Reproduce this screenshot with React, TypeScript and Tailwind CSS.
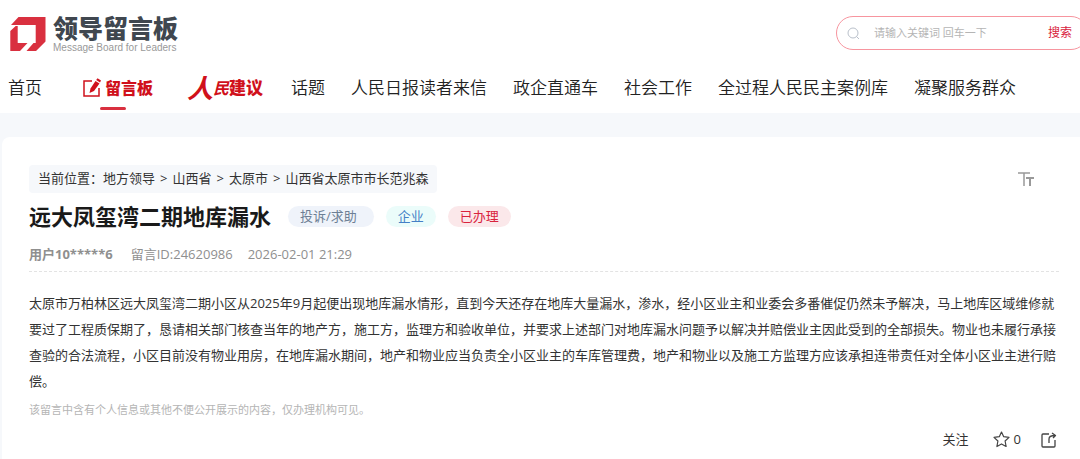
const navItems = ["话题", "人民日报读者来信", "政企直通车", "社会工作", "全过程人民民主案例库", "凝聚服务群众"];

const crumbs = ["地方领导", "山西省", "太原市", "山西省太原市市长范兆森"];

const tags = [
  { label: "投诉/求助", style: "bg-[#eff3fa] text-[#6d7f95] pr-[17px]" },
  { label: "企业", style: "bg-[#ebfcfa] text-[#4480c6]" },
  { label: "已办理", style: "bg-[#fbe8ea] text-[#d9233d]" },
];

function Logo() {
  return (
    <a href="#" className="flex items-start gap-[7px]">
      <svg width="36" height="36" viewBox="0 0 36 36" className="mt-px">
        <path d="M8.5 0H35.5V24.5L26 34H16.5L23.5 26H25.7V8H1Z" fill="#d9303f" />
        <path d="M5.7 9L0.3 14V34H10L17.5 26H7.7V9Z" fill="#d9303f" />
      </svg>
      <span className="flex flex-col">
        <span className="text-[25px] leading-[25px] font-black text-[#40474f]">领导留言板</span>
        <span className="mt-px font-['Liberation_Sans',sans-serif] text-[10px] leading-3 text-[#999]">
          Message Board for Leaders
        </span>
      </span>
    </a>
  );
}

function SearchBox() {
  return (
    <form className="-mr-2 flex h-[34px] w-[252px] items-center rounded-full border border-[#f7959f] pr-[15px] pl-[10px]">
      <svg width="13" height="13" viewBox="0 0 13 13" fill="none" stroke="#b9c0ca">
        <circle cx="6" cy="6" r="5" />
        <path d="M9.5 9.5L12 12" />
      </svg>
      <input
        type="text"
        aria-label="搜索关键词"
        placeholder="请输入关键词 回车一下"
        className="ml-[14px] min-w-0 flex-1 text-[11px] outline-none placeholder:text-[#b5b5b5]"
      />
      <button type="button" className="text-[12px] text-[#d9233d]">
        搜索
      </button>
    </form>
  );
}

function NavBar() {
  return (
    <nav className="flex h-[52px] items-center overflow-hidden pt-[2px] pl-2 text-[17px] font-[350] whitespace-nowrap text-[#222]">
      <a href="#">首页</a>
      <a href="#" className="relative ml-10 flex items-center gap-[3px] font-black text-[#d0101b]">
        <svg width="20" height="20" viewBox="0 0 20 20" fill="none" stroke="#d0101b" strokeWidth="1.5">
          <path d="M10 3H2V18H17V10" />
          <path d="M7.5 15L8.5 10.5L13.5 3L17.5 5.5L12 13Z" fill="#d0101b" stroke="none" />
          <path d="M14.2 2L15.5 0.2L19 2.6L18 4.5Z" fill="#d0101b" stroke="none" />
        </svg>
        <span className="text-base">留言板</span>
        <span className="absolute top-full left-[18px] mt-[7px] h-[3px] w-[26px] rounded-full bg-[#d9303f]" />
      </a>
      <a href="#" className="ml-[34px] flex items-center font-black text-[#d0101b]">
        <span className="text-[26px] font-bold italic">人</span>
        <span className="text-base font-bold italic">民</span>
        <span>建议</span>
      </a>
      <div className="ml-7 flex gap-[26px]">
        {navItems.map((item) => (
          <a key={item} href="#">
            {item}
          </a>
        ))}
      </div>
    </nav>
  );
}

function MessageCard() {
  return (
    <main className="ml-[2px] rounded-tl-lg bg-white pt-7 pr-[21px] pb-4 pl-[27px]">
      <div className="flex items-center justify-between">
        <div className="flex h-7 items-center rounded bg-[#f6f8fb] px-[9px] text-[13px] text-[#333]">
          <span>当前位置：</span>
          {crumbs.map((crumb, i) => (
            <span key={crumb}>
              {i > 0 && <span className="mx-[5px]">&gt;</span>}
              <a href="#">{crumb}</a>
            </span>
          ))}
        </div>
        <button type="button" aria-label="字号" className="mr-6">
          <svg width="18" height="16" viewBox="0 0 18 16" fill="none" stroke="#999" strokeWidth="1.5">
            <path d="M1 2H13M7 2V15" />
            <path d="M9 7H17M13 7V15" strokeWidth="2" />
          </svg>
        </button>
      </div>

      <div className="mt-2 flex items-center">
        <h1 className="mr-[17px] text-[22px] leading-[30px] font-bold text-[#1a1a1a]">远大凤玺湾二期地库漏水</h1>
        <div className="flex gap-3">
          {tags.map((tag) => (
            <span key={tag.label} className={`h-[21px] rounded-full px-3 text-[13px] leading-[21px] ${tag.style}`}>
              {tag.label}
            </span>
          ))}
        </div>
      </div>

      <div className="mt-3 flex h-[29px] border-b border-dashed border-[#e3e3e3] text-[13px] leading-[22px] text-[#8f8f8f]">
        <strong className="mr-[18px]">用户10*****6</strong>
        <span className="mr-[15px]">留言ID:24620986</span>
        <time>2026-02-01 21:29</time>
      </div>

      <p className="mt-[18px] text-[13px] leading-[26px] text-[#333]">
        太原市万柏林区远大凤玺湾二期小区从2025年9月起便出现地库漏水情形，直到今天还存在地库大量漏水，渗水，经小区业主和业委会多番催促仍然未予解决，马上地库区域维修就要过了工程质保期了，恳请相关部门核查当年的地产方，施工方，监理方和验收单位，并要求上述部门对地库漏水问题予以解决并赔偿业主因此受到的全部损失。物业也未履行承接查验的合法流程，小区目前没有物业用房，在地库漏水期间，地产和物业应当负责全小区业主的车库管理费，地产和物业以及施工方监理方应该承担连带责任对全体小区业主进行赔偿。
      </p>
      <p className="mt-1 text-[11px] leading-6 text-[#b5b5b5]">该留言中含有个人信息或其他不便公开展示的内容，仅办理机构可见。</p>

      <div className="mt-2 flex items-center justify-end pr-[2px] text-[13px] text-[#333]">
        <button type="button">关注</button>
        <button type="button" className="ml-6 flex items-center gap-1">
          <svg width="17" height="17" viewBox="0 0 17 17" fill="none" stroke="#444" strokeWidth="1.2" strokeLinejoin="round">
            <path d="M8.5 1L10.7 5.7L16 6.4L12.1 10L13.1 15.5L8.5 12.9L3.9 15.5L4.9 10L1 6.4L6.3 5.7Z" />
          </svg>
          0
        </button>
        <button type="button" aria-label="分享" className="ml-5">
          <svg width="16" height="16" viewBox="0 0 16 16" fill="none" stroke="#444" strokeWidth="1.3" strokeLinejoin="round">
            <path d="M8 2H2Q1 2 1 3V14Q1 15 2 15H13Q14 15 14 14V8" />
            <path d="M8 11V7Q8 3.5 14 3.5M11 1L14.5 3.5L12 6" />
          </svg>
        </button>
      </div>
    </main>
  );
}

export default function App() {
  return (
    <div className="min-h-screen bg-[#f6f8fb] font-['Open_Sans','Noto_Sans_CJK_SC',sans-serif]">
      <header className="overflow-hidden bg-white">
        <div className="flex items-start justify-between pt-4 pl-[10px]">
          <Logo />
          <SearchBox />
        </div>
        <div className="mt-[7px]">
          <NavBar />
        </div>
      </header>
      <div className="pt-6">
        <MessageCard />
      </div>
    </div>
  );
}
